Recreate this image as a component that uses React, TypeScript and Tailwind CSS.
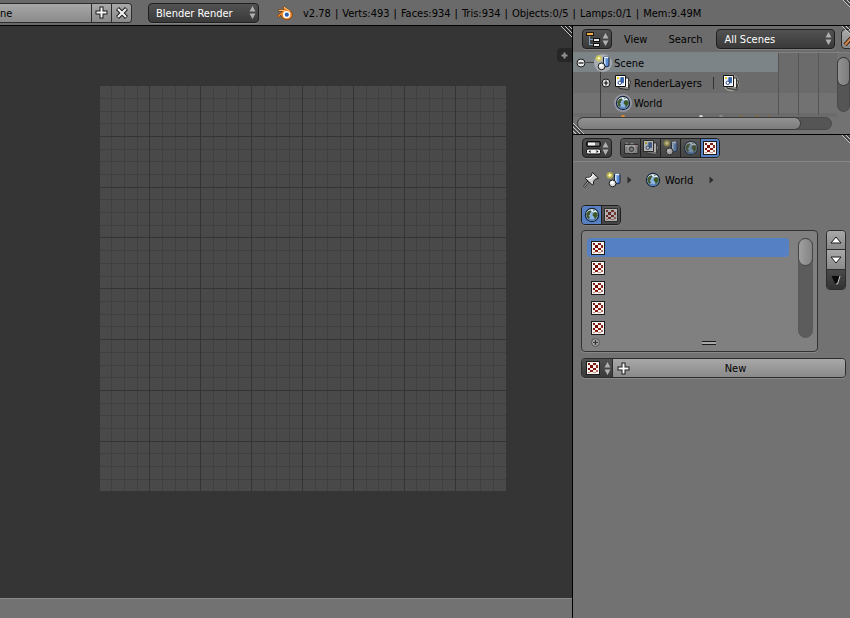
import type { ReactNode } from "react";

function CheckerIcon({ size = 14 }: { size?: number }) {
  const cells: [number, number, number, number, string][] = [
    [2, 2, 2, 2, "#7d1c12"], [7, 2, 3, 2, "#7d1c12"],
    [4, 4, 3, 3, "#7a0c08"], [10, 4, 2, 3, "#8c2a20"],
    [2, 7, 2, 2, "#7a0c08"], [7, 7, 3, 2, "#841810"],
    [4, 9, 3, 2, "#861c14"], [10, 9, 2, 2, "#b07068"],
    [2, 11, 2, 1, "#c98a80"], [7, 11, 3, 1, "#cf9c92"],
  ];
  return (
    <svg width={size} height={size} viewBox="0 0 14 14" shapeRendering="crispEdges" aria-hidden="true">
      <rect width="14" height="14" fill="#1c1c1c" />
      <rect x="1" y="1" width="12" height="12" fill="#f6f2f0" />
      {cells.map(([x, y, w, h, c]) => (
        <rect key={`${x}-${y}`} x={x} y={y} width={w} height={h} fill={c} />
      ))}
    </svg>
  );
}

function GlobeIcon({ halo = false }: { halo?: boolean }) {
  return (
    <svg width="18" height="18" viewBox="0 0 18 18" aria-hidden="true">
      {halo && <circle cx="9" cy="9" r="9" fill="#a4a8ba" opacity="0.7" />}
      <circle cx="9" cy="9" r="6.6" fill="#8db4e0" stroke="#1b2438" strokeWidth="1.2" />
      <path d="M3.400 7A6 6 0 0 1 14.600 7Q9 4.600 3.400 7z" fill="#e9f4ff" />
      <path d="M4 12.200A6 6 0 0 0 14 12.200Q9 14.200 4 12.200z" fill="#5480bc" />
      <path d="M3.200 8 5 5.200 7.800 4.200 8.600 5.600 6.800 7.200 7 8.800 5.600 9.200 6.800 11 6.200 13.200 4.200 11.600z" fill="#42582a" />
      <path d="M9.800 7.600 12 6 14.200 6.800 14.800 9.400 13.400 11.600 11.800 13.400 11 10.800 9.600 9.600z" fill="#3e5828" />
      <path d="M9.500 3.600 12 4.200 10.600 5.200z" fill="#5c7840" />
    </svg>
  );
}

function SceneIcon({ halo = false }: { halo?: boolean }) {
  return (
    <svg width="18" height="18" viewBox="0 0 18 18" aria-hidden="true">
      {halo && <circle cx="9" cy="9" r="9" fill="#b9bcc4" opacity="0.7" />}
      <circle cx="4.8" cy="4.3" r="3.4" fill="#e6dc50" opacity="0.5" />
      <circle cx="4.8" cy="4.3" r="1.8" fill="#fffbd0" stroke="#d2c63c" />
      <path d="M9.500 3.400q2.800-1.800 5.500 0v8.500q-2.700 1.800-5.500 0z" fill="#5c8ed8" stroke="#16233c" />
      <path d="M10.800 4.600v7" stroke="#cfe2fa" strokeWidth="1.600" />
      <ellipse cx="12.2" cy="3.400" rx="2.300" ry="0.900" fill="#e8f2ff" />
      <circle cx="7.6" cy="12.4" r="3.400" fill="#e0e0e0" stroke="#1a1a1a" />
      <circle cx="6.9" cy="11.500" r="1.600" fill="#fff" />
    </svg>
  );
}

function LayersIcon({ halo = false }: { halo?: boolean }) {
  return (
    <svg width="18" height="18" viewBox="0 0 18 18" aria-hidden="true">
      {halo && <circle cx="9" cy="9" r="8.5" fill="#a8a598" opacity="0.7" />}
      <path d="M7 5.500 16.500 7 14.600 15.900 5.600 14.400z" fill="#d8d4cc" stroke="#222" strokeWidth="0.9" />
      <path d="M5 4h9.500v10H5z" fill="#f2efe8" stroke="#222" strokeWidth="0.9" />
      <path d="M1.500 1.500h10v11h-10z" fill="#fff" stroke="#111" />
      <path d="M3.200 3.200h6.800v7.600H3.200z" fill="#dce9fa" />
      <path d="M6.800 3.600h2.700v5H6.800z" fill="#2f66c0" stroke="#173468" strokeWidth="0.6" />
      <circle cx="5.8" cy="8.8" r="1.7" fill="#fff" stroke="#223e70" strokeWidth="0.9" />
      <path d="M3 3h2v2H3z" fill="#f0c838" />
    </svg>
  );
}

function CameraIcon() {
  return (
    <svg width="18" height="18" viewBox="0 0 18 18" aria-hidden="true">
      <path d="M2.500 5.500h13.500v9H2.500z" fill="#a4a4a4" stroke="#191919" />
      <path d="M3 6h12.500v2H3z" fill="#d4d4d4" />
      <path d="M3 3.200h3.500v1.700H3zM8 3.500h4v1.700H8z" fill="#c8c8c8" stroke="#222" strokeWidth="0.500" />
      <circle cx="9.500" cy="10.200" r="3.500" fill="#484848" stroke="#e0e0e0" />
      <circle cx="9.500" cy="10.200" r="1.500" fill="#999" />
      <path d="M13.500 6.500h1.500v1.300h-1.500z" fill="#d05248" />
    </svg>
  );
}

function PinIcon() {
  return (
    <svg width="18" height="18" viewBox="0 0 18 18" aria-hidden="true">
      <path d="M6.800 10 1.800 16" stroke="#1a1a1a" strokeWidth="2.200" />
      <path d="M10.500 1.500 16.500 7.200 14.800 8 13.800 7.700 11.600 10.200 11.400 13.300 10.200 13.800 3.500 7.600 4.300 6.500 7.400 6.300 10 4.300 9.700 2.900z" fill="#d4d4d4" stroke="#1a1a1a" />
      <path d="M5 7.300 8 7.300 11 4.800 11 3.200" stroke="#fff" strokeWidth="1.300" fill="none" />
      <path d="M6.300 10.800 2 15.800" stroke="#e8e8e8" strokeWidth="0.900" />
    </svg>
  );
}

function BlenderLogo() {
  return (
    <svg width="18" height="16" viewBox="0 0 18 16" aria-hidden="true">
      <path d="M1 11 6.500 6.300H2.600V4.600H8.400L6.700 3.200 8 1.500 14.500 5.800Q17 8 16.300 11 15 14.800 10.500 14.800 6 14.400 5 10.200L2.500 12.500z" fill="#f08a28" stroke="#6a3a10" strokeWidth="0.700" />
      <path d="M8 2.200 14 6.200M3 5.400h6" stroke="#ffc890" strokeWidth="0.900" />
      <circle cx="10.600" cy="9.700" r="3.600" fill="#fff" />
      <circle cx="10.800" cy="9.700" r="2.100" fill="#2a5ea8" />
    </svg>
  );
}

function OutlinerIcon() {
  return (
    <svg width="16" height="16" viewBox="0 0 16 16" shapeRendering="crispEdges" aria-hidden="true">
      <path d="M3.500 5v9M4 8.500h4M4 13.500h4" stroke="#7f9fc0" fill="none" />
      <path d="M0 1h8v4H0z" fill="#20180c" />
      <path d="M1 2h6v2H1z" fill="#f0b050" />
      <path d="M7 7h7v4H7zM7 12h7v4H7z" fill="#111" />
      <path d="M8 8h5v2H8zM8 13h5v2H8z" fill="#e6e6e6" />
    </svg>
  );
}

function PropertiesIcon() {
  return (
    <svg width="16" height="16" viewBox="0 0 16 16" aria-hidden="true">
      <rect x="0.500" y="1.500" width="14" height="5" rx="1.500" fill="#333" stroke="#0c0c0c" />
      <path d="M2 2.500h7v3H2z" fill="#f2f2f2" />
      <path d="M9 2.500h4v3H9z" fill="#7e7e7e" />
      <rect x="0.500" y="9" width="14" height="5" rx="1.500" fill="#eee" stroke="#0c0c0c" />
      <path d="M4.500 10v3L2.500 11.500zM10.500 10v3l2-1.500z" fill="#111" />
    </svg>
  );
}

function Arrows() {
  return (
    <svg width="7" height="13" viewBox="0 0 7 13" className="shrink-0" aria-hidden="true">
      <path d="M3.500 0 6.500 5.500H0.500zM3.500 13 6.500 7.500H0.500z" fill="#b0b0b0" />
    </svg>
  );
}

function PlusIcon() {
  return (
    <svg width="13" height="13" viewBox="0 0 13 13" className="shrink-0" aria-hidden="true">
      <path d="M4.500 0.500h4v4h4v4h-4v4h-4v-4h-4v-4h4z" fill="#1a1a1a" />
      <path d="M5.500 1.500h2v4h4v2h-4v4h-2v-4h-4v-2h4z" fill="#f8f8f8" />
    </svg>
  );
}

function CrossIcon() {
  return (
    <svg width="14" height="14" viewBox="0 0 14 14" aria-hidden="true">
      <path d="M2.500 2.500l9 9M11.500 2.500l-9 9" stroke="#1a1a1a" strokeWidth="4.200" />
      <path d="M3 3l8 8M11 3l-8 8" stroke="#f2f2f2" strokeWidth="2.200" />
    </svg>
  );
}

function Hatch({ className, flip = false }: { className: string; flip?: boolean }) {
  return (
    <svg width="11" height="11" viewBox="0 0 11 11" className={`absolute ${className}`} aria-hidden="true">
      <path d={flip ? "M0 0 11 11M0 4l7 7M0 8l3 3" : "M0 0 11 11M4 0l7 7M8 0l3 3"} stroke="#c8c8c8" />
      <path d={flip ? "M0 1.500 9.500 11M0 5.500 5.500 11" : "M1.500 0 11 9.500M5.500 0 11 5.500"} stroke="#181818" />
    </svg>
  );
}

function Expander({ open }: { open: boolean }) {
  return (
    <svg width="10" height="10" viewBox="0 0 10 10" className="shrink-0" aria-hidden="true">
      <circle cx="5" cy="5" r="4" fill="#e8e8e8" stroke="#1a1a1a" />
      <path d={open ? "M2.500 5h5" : "M2.500 5h5M5 2.500v5"} stroke="#111" strokeWidth="1.200" />
    </svg>
  );
}

function Crumb() {
  return (
    <svg width="5" height="8" viewBox="0 0 5 8" className="shrink-0" aria-hidden="true">
      <path d="M0.500 0.500 4.500 4 0.500 7.500z" fill="#2c2c2c" />
    </svg>
  );
}

function MenuSelect({ label, value, className }: { label: string; value: string; className: string }) {
  return (
    <div className={`relative h-5 shrink-0 ${className}`}>
      <select
        aria-label={label}
        className="h-5 w-full appearance-none rounded border border-[#1f1f1f] bg-linear-to-b from-[#525252] to-[#3a3a3a] pt-0.5 pl-[7px] text-white shadow-[0_1px_0_#808080]"
      >
        <option>{value}</option>
      </select>
      <span className="pointer-events-none absolute top-[3px] right-[3px]">
        <Arrows />
      </span>
    </div>
  );
}

function EditorButton({ label, children }: { label: string; children: ReactNode }) {
  return (
    <button
      aria-label={label}
      className="flex h-5 w-[30px] shrink-0 items-center justify-between rounded border border-[#1f1f1f] bg-linear-to-b from-[#525252] to-[#3a3a3a] pr-0.5 pl-[3px] shadow-[0_1px_0_#808080]"
    >
      {children}
      <Arrows />
    </button>
  );
}

function Tab({ label, active = false, children }: { label: string; active?: boolean; children: ReactNode }) {
  return (
    <button
      role="tab"
      aria-label={label}
      aria-selected={active}
      className={`flex h-[18px] w-5 shrink-0 items-center justify-center border-r border-[#1f1f1f] last:w-[18px] last:border-r-0 ${active ? "bg-[#5680c2]" : "bg-linear-to-b from-[#565656] to-[#444]"}`}
    >
      <span className={`shrink-0 ${active ? "" : "opacity-60"}`}>{children}</span>
    </button>
  );
}

function EditorGrid() {
  const steps = Array.from({ length: 31 }, (_, i) => i + 1);
  const minor = steps.filter((i) => i % 4 !== 0);
  const major = steps.filter((i) => i % 4 === 0);
  const x = (i: number) => Math.floor(i * 12.72 - 1.1);
  const y = (i: number) => Math.floor(i * 12.7 - 0.4);
  const lines = (list: number[], color: string) =>
    list.map((i) => (
      <g key={i} fill={color}>
        <rect x={x(i)} y="0" width="1" height="405" />
        <rect x="0" y={y(i)} width="406" height="1" />
      </g>
    ));
  return (
    <svg width="406" height="405" shapeRendering="crispEdges" role="img" aria-label="Image editor grid">
      <rect width="406" height="405" fill="#494949" />
      {lines(minor, "#404040")}
      {lines(major, "#343434")}
    </svg>
  );
}

const stats = ["v2.78", "Verts:493", "Faces:934", "Tris:934", "Objects:0/5", "Lamps:0/1", "Mem:9.49M"];
const slots = [1, 2, 3, 4, 5];
const light = "bg-linear-to-b from-[#a8a8a8] to-[#8a8a8a]";

export default function App() {
  return (
    <div className="flex h-screen flex-col overflow-hidden bg-[#727272] font-['DejaVu_Sans_Condensed','DejaVu_Sans',sans-serif] text-[11px] leading-[14px] text-black">
      <header className="relative flex h-[26px] shrink-0 items-center overflow-hidden border-b border-black bg-[#6a6a6a]">
        <div className="flex h-5 overflow-hidden rounded-r border border-l-0 border-[#2c2c2c]">
          <input aria-label="Scene name" defaultValue="ne" className={`w-[91px] pt-0.5 ${light}`} />
          <button aria-label="Add scene" className={`flex w-5 items-center justify-center border-l border-[#2c2c2c] ${light}`}>
            <PlusIcon />
          </button>
          <button aria-label="Remove scene" className={`flex w-5 items-center justify-center border-l border-[#2c2c2c] ${light}`}>
            <CrossIcon />
          </button>
        </div>
        <MenuSelect label="Render engine" value="Blender Render" className="ml-4 w-[111px]" />
        <span className="ml-[17px]">
          <BlenderLogo />
        </span>
        <div className="ml-[9px] flex gap-1 pt-0.5 whitespace-nowrap">
          {stats.map((s, i) => (
            <span key={s} className="flex gap-1">
              {i > 0 && <span>|</span>}
              <span>{s}</span>
            </span>
          ))}
        </div>
        <Hatch className="-top-px right-[-3px]" />
      </header>

      <div className="flex min-h-0 flex-1">
        <main className="relative flex min-w-0 flex-1 flex-col bg-[#353535]">
          <div className="min-h-0 flex-1 overflow-hidden pt-[60px] pl-[100px]">
            <EditorGrid />
          </div>
          <footer className="h-5 shrink-0 border-t border-[#8a8a8a] bg-[#727272]" />
          <Hatch className="top-0 right-0" />
          <button aria-label="Show panel" className="absolute top-[22px] right-0 flex h-[14px] w-[15px] items-center justify-center rounded-l bg-[#262626]">
            <svg width="7" height="7" viewBox="0 0 7 7" aria-hidden="true">
              <path d="M3.500 0.500v6M0.500 3.500h6" stroke="#909090" strokeWidth="2" />
            </svg>
          </button>
        </main>

        <aside className="flex w-[278px] shrink-0 flex-col border-l border-black">
          <section className="relative shrink-0 overflow-hidden border-b border-black">
            <div className="relative flex h-[27px] items-center overflow-hidden border-b border-[#808080] bg-[#6c6c6c] pl-[9px]">
              <EditorButton label="Outliner editor">
                <OutlinerIcon />
              </EditorButton>
              <button className="ml-3 pt-0.5">View</button>
              <button className="ml-[21px] pt-0.5">Search</button>
              <MenuSelect label="Display mode" value="All Scenes" className="ml-[14px] w-[119px]" />
              <button aria-label="Search filter" className={`ml-[6px] h-5 w-5 shrink-0 rounded border border-[#2c2c2c] ${light}`}>
                <svg width="14" height="16" viewBox="0 0 14 16" aria-hidden="true">
                  <path d="M3 14 9 7" stroke="#3a2010" strokeWidth="4" />
                  <path d="M3 14 9 7" stroke="#d08850" strokeWidth="2" />
                </svg>
              </button>
              <Hatch className="top-0 right-[-3px]" />
            </div>
            <div className="flex h-[81px]">
              <div className="flex min-w-0 flex-1 flex-col">
                <ul className="relative h-16 overflow-hidden bg-[#6b6b6b]">
                  <li className="mr-[59px] flex h-[19px] items-center bg-[#7d8488] pl-[3px]">
                    <Expander open />
                    <span className="h-px w-2 bg-[#444]" />
                    <SceneIcon halo />
                    <span className="ml-0.5 pt-0.5">Scene</span>
                  </li>
                  <li className="flex h-[21px] items-center bg-[#6b6b6b] pl-[28px]">
                    <Expander open={false} />
                    <span className="ml-[3px]">
                      <LayersIcon />
                    </span>
                    <span className="ml-[2px] w-[79px] pt-0.5">RenderLayers</span>
                    <span className="h-3 w-px bg-[#333]" />
                    <span className="ml-2">
                      <LayersIcon halo />
                    </span>
                  </li>
                  <li className="flex h-5 items-center bg-[#727272] pl-[41px]">
                    <GlobeIcon halo />
                    <span className="ml-[2px] pt-0.5">World</span>
                  </li>
                  <li className="flex h-5 items-start pt-0.5 pl-[48px]">
                    <span className="h-2 w-1 rounded-t bg-[#e08a30]" />
                    <span className="ml-[74px] h-2 w-1 rounded-t bg-[#d8d8d8]" />
                    <span className="ml-4 h-2 w-1 rounded-t bg-[#8c8c8c]" />
                    <span className="ml-4 h-2 w-1 rounded-t bg-[#80684a]" />
                    <span className="ml-3 h-2 w-1 rounded-t bg-[#80684a]" />
                    <span className="ml-2 h-2 w-1 rounded-t bg-[#80684a]" />
                  </li>
                  <li aria-hidden="true" className="absolute top-[19px] left-[27px] h-12 w-px bg-[#3c3c3c]" />
                  <li aria-hidden="true" className="absolute top-0 right-[18px] flex h-[62px] w-[41px] justify-between">
                    <span className="w-px bg-[#555]" />
                    <span className="w-px bg-[#555]" />
                    <span className="w-px bg-[#555]" />
                  </li>
                </ul>
                <div className="mr-[5px] ml-1 h-[13px] rounded-full border border-[#4a4a4a] bg-[#555]">
                  <div className="-mt-px -ml-px h-[13px] w-[224px] rounded-full border border-[#3a3a3a] bg-linear-to-b from-[#929292] to-[#7c7c7c]" />
                </div>
              </div>
              <div className="mt-1 h-[55px] w-[13px] shrink-0 rounded-full border border-[#4a4a4a] bg-[#555]">
                <div className="-mt-px -ml-px h-[29px] w-[13px] rounded-full border border-[#3a3a3a] bg-linear-to-r from-[#929292] to-[#7c7c7c]" />
              </div>
            </div>
            <Hatch className="bottom-0 left-0" flip />
          </section>

          <section className="relative min-h-0 flex-1 overflow-hidden">
            <div className="flex h-[27px] items-center border-b border-[#868686] bg-[#6c6c6c] pl-[9px]">
              <EditorButton label="Properties editor">
                <PropertiesIcon />
              </EditorButton>
              <div role="tablist" aria-label="Properties" className="ml-2 flex h-5 overflow-hidden rounded border border-[#1f1f1f] shadow-[0_1px_0_#808080]">
                <Tab label="Render"><CameraIcon /></Tab>
                <Tab label="Render layers"><LayersIcon /></Tab>
                <Tab label="Scene"><SceneIcon /></Tab>
                <Tab label="World"><GlobeIcon /></Tab>
                <Tab label="Texture" active><CheckerIcon /></Tab>
              </div>
            </div>

            <nav aria-label="Context" className="flex h-9 items-center pl-[9px]">
              <button aria-label="Pin"><PinIcon /></button>
              <span className="ml-[5px]"><SceneIcon /></span>
              <span className="ml-[4px]"><Crumb /></span>
              <span className="ml-[12px]"><GlobeIcon /></span>
              <span className="ml-[3px] pt-0.5">World</span>
              <span className="ml-4"><Crumb /></span>
            </nav>

            <div className="px-2 pr-1 pt-[7px]">
              <div role="tablist" aria-label="Texture context" className="flex h-5 w-10 overflow-hidden rounded border border-[#1f1f1f] shadow-[0_1px_0_#808080]">
                <Tab label="World textures" active><GlobeIcon /></Tab>
                <Tab label="Other textures"><CheckerIcon /></Tab>
              </div>

              <div className="mt-[5px] flex items-start gap-2">
                <div className="flex h-[122px] min-w-0 flex-1 rounded border border-[#333] bg-[#808080] pt-[7px] pl-[5px] shadow-[0_1px_0_#888]">
                  <div className="flex min-w-0 flex-1 flex-col">
                    <ul role="listbox" aria-label="Texture slots">
                      {slots.map((n) => (
                        <li key={n} role="option" aria-selected={n === 1} className={`mb-px flex h-[19px] items-center rounded-sm pl-1 ${n === 1 ? "bg-[#5680c4]" : ""}`}>
                          <CheckerIcon />
                        </li>
                      ))}
                    </ul>
                    <div className="flex h-[9px] items-center pl-1">
                      <button aria-label="Filter">
                        <svg width="9" height="9" viewBox="0 0 9 9" className="block" aria-hidden="true">
                          <circle cx="4.500" cy="4.500" r="4" fill="#a0a0a0" stroke="#555" />
                          <path d="M2 4.500h5M4.500 2v5" stroke="#333" strokeWidth="1.200" />
                        </svg>
                      </button>
                      <span className="ml-[102px] h-1 w-[14px] border-y border-[#1a1a1a] bg-[#a8a8a8]" />
                    </div>
                  </div>
                  <div className="mr-1 ml-[9px] h-[100px] w-[15px] rounded-full border border-[#5a5a5a] bg-[#5c5c5c]">
                    <div className="-mt-px -ml-px h-7 w-[15px] rounded-full border border-[#444] bg-linear-to-r from-[#a0a0a0] to-[#848484]" />
                  </div>
                </div>
                <div className="flex w-5 flex-col overflow-hidden rounded border border-[#2c2c2c]">
                  <button aria-label="Move up" className={`flex h-[19px] items-center justify-center border-b border-[#2c2c2c] ${light}`}>
                    <svg width="12" height="8" viewBox="0 0 12 8" aria-hidden="true">
                      <path d="M6 1 11 7H1z" fill="#fff" stroke="#1a1a1a" />
                    </svg>
                  </button>
                  <button aria-label="Move down" className={`flex h-5 items-center justify-center border-b border-[#2c2c2c] ${light}`}>
                    <svg width="12" height="8" viewBox="0 0 12 8" aria-hidden="true">
                      <path d="M6 7 11 1H1z" fill="#fff" stroke="#1a1a1a" />
                    </svg>
                  </button>
                  <button aria-label="Slot specials" className="flex h-[19px] items-center justify-center bg-linear-to-b from-[#4a4a4a] to-[#333]">
                    <svg width="10" height="10" viewBox="0 0 10 10" aria-hidden="true">
                      <path d="M0.500 1H9L6.500 9.500H4.500z" fill="#0a0a0a" />
                      <path d="M9 1 6.500 9H4.800" stroke="#d0d0d0" fill="none" />
                    </svg>
                  </button>
                </div>
              </div>

              <div className="mt-[6px] flex h-5 overflow-hidden rounded border border-[#2c2c2c] shadow-[0_1px_0_#888]">
                <button aria-label="Browse texture" className="flex w-[31px] shrink-0 items-center gap-1 border-r border-[#2c2c2c] bg-linear-to-b from-[#525252] to-[#3a3a3a] pl-1">
                  <CheckerIcon />
                  <Arrows />
                </button>
                <button className={`flex flex-1 items-center pl-1 ${light}`}>
                  <PlusIcon />
                  <span className="flex-1 pt-0.5 pr-1 text-center">New</span>
                </button>
              </div>
            </div>
            <Hatch className="top-0 right-[-3px]" />
          </section>
        </aside>
      </div>
    </div>
  );
}
